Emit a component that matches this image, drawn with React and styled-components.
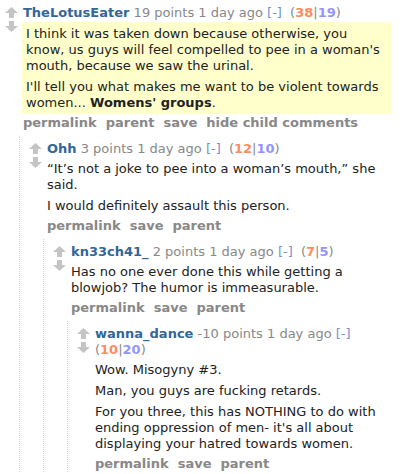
import styled, { createGlobalStyle } from 'styled-components';

const GlobalStyle = createGlobalStyle`
  body {
    margin: 0;
    background: #fff;
    font-family: 'DejaVu Sans', Verdana, sans-serif;
  }
`;

const Page = styled.div`
  width: 386px;
  padding: 5px 0 0 5px;
`;

const CommentRow = styled.div`
  display: flex;
  align-items: flex-start;
`;

const Votes = styled.div`
  flex: 0 0 18px;
  display: flex;
  flex-direction: column;
  gap: 3px;
  padding-top: 2px;
`;

const Entry = styled.div`
  flex: 1;
  min-width: 0;
`;

const Tagline = styled.div`
  font-size: 13px;
  line-height: 16px;
  color: #888;
`;

const Author = styled.span`
  color: #369;
  font-weight: bold;
`;

const Expand = styled.span`
  color: #7393c8;
  margin-right: 4px;
`;

const Score = styled.span`
  white-space: nowrap;
`;

const Num = styled.b`
  color: ${(p) => (p.up ? '#ff8b60' : '#9494ff')};
`;

const Body = styled.div`
  font-size: 13px;
  line-height: 16px;
  color: #222;
  margin-top: ${(p) => (p.highlight ? '1px' : '4px')};
  margin-left: ${(p) => (p.highlight ? '-1px' : '0')};
  padding: ${(p) => (p.highlight ? '4px 3px 3px 4px' : '0')};
  background: ${(p) => (p.highlight ? '#ffffcc' : 'transparent')};

  p {
    margin: 0 0 5px;
  }
  p:last-child {
    margin-bottom: 0;
  }
`;

const Buttons = styled.div`
  display: flex;
  gap: 9px;
  margin-top: ${(p) => (p.highlight ? '1px' : '4px')};
  font-size: 13px;
  line-height: 16px;
  font-weight: bold;
  color: #888;
`;

const Child = styled.div`
  margin: 5px 0 0 14px;
  padding: 5px 0 0 9px;
  border-left: 1px dotted #d0d0ee;
`;

const Arrow = ({ down }) => (
  <svg width="13" height="11" viewBox="0 0 13 11" style={{ display: 'block' }}>
    <path
      d="M6.5 0 L13 6 L9 6 L9 11 L4 11 L4 6 L0 6 Z"
      fill="#c4c4c4"
      transform={down ? 'rotate(180 6.5 5.5)' : undefined}
    />
  </svg>
);

const Comment = ({ author, points, up, down, highlight, paras, buttons, children }) => (
  <div>
    <CommentRow>
      <Votes>
        <Arrow />
        <Arrow down />
      </Votes>
      <Entry>
        <Tagline>
          <Author>{author}</Author> {points} points 1 day ago <Expand>[-]</Expand>{' '}
          <Score>
            (<Num up>{up}</Num>|<Num>{down}</Num>)
          </Score>
        </Tagline>
        <Body highlight={highlight}>
          {paras.map((p, i) => (
            <p key={i}>{p}</p>
          ))}
        </Body>
        <Buttons highlight={highlight}>
          {buttons.map((b) => (
            <span key={b}>{b}</span>
          ))}
        </Buttons>
      </Entry>
    </CommentRow>
    {children && <Child>{children}</Child>}
  </div>
);

const App = () => (
  <>
    <GlobalStyle />
    <Page>
      <Comment
        author="TheLotusEater"
        points="19"
        up="38"
        down="19"
        highlight
        paras={[
          "I think it was taken down because otherwise, you know, us guys will feel compelled to pee in a woman's mouth, because we saw the urinal.",
          <>
            I'll tell you what makes me want to be violent towards women... <b>Womens' groups</b>.
          </>,
        ]}
        buttons={['permalink', 'parent', 'save', 'hide child comments']}
      >
        <Comment
          author="Ohh"
          points="3"
          up="12"
          down="10"
          paras={[
            '\u201CIt\u2019s not a joke to pee into a woman\u2019s mouth,\u201D she said.',
            'I would definitely assault this person.',
          ]}
          buttons={['permalink', 'save', 'parent']}
        >
          <Comment
            author="kn33ch41_"
            points="2"
            up="7"
            down="5"
            paras={['Has no one ever done this while getting a blowjob? The humor is immeasurable.']}
            buttons={['permalink', 'save', 'parent']}
          >
            <Comment
              author="wanna_dance"
              points="-10"
              up="10"
              down="20"
              paras={[
                'Wow. Misogyny #3.',
                'Man, you guys are fucking retards.',
                "For you three, this has NOTHING to do with ending oppression of men- it's all about displaying your hatred towards women.",
              ]}
              buttons={['permalink', 'save', 'parent']}
            />
          </Comment>
        </Comment>
      </Comment>
    </Page>
  </>
);

export default App;
